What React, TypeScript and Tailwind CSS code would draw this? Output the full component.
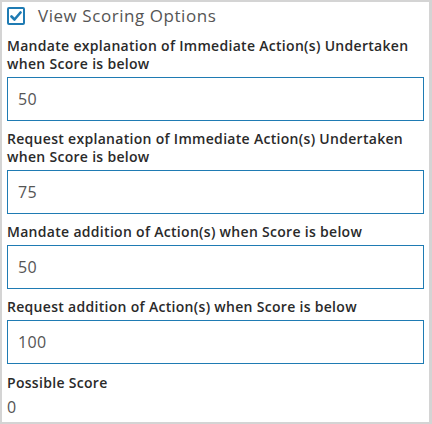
import React from "react";

const fields = [
  { label: "Mandate explanation of Immediate Action(s) Undertaken when Score is below", value: "50" },
  { label: "Request explanation of Immediate Action(s) Undertaken when Score is below", value: "75" },
  { label: "Mandate addition of Action(s) when Score is below", value: "50" },
  { label: "Request addition of Action(s) when Score is below", value: "100" },
];

export default function App() {
  return (
    <div className="w-[432px] h-[424px] bg-white border-[#d4d4d4] border-t-2 border-l-2 border-r-[3px] border-b-2 overflow-hidden" style={{ fontFamily: '"Open Sans", sans-serif' }}>
      <div className="flex items-center h-[27px] pl-[5px]">
        <div className="w-[18px] h-[18px] border-2 border-[#1f7bb3] rounded-[2px] flex items-center justify-center">
          <svg width="12" height="10" viewBox="0 0 12 10">
            <path d="M1.5 5.5 L4.5 8.5 L10.5 1.5" fill="none" stroke="#1f7bb3" strokeWidth="2.6" strokeLinecap="round" strokeLinejoin="round" />
          </svg>
        </div>
        <span className="ml-[13px] text-[17px] text-[#555] leading-none tracking-[0.55px]">View Scoring Options</span>
      </div>
      <div className="flex flex-col px-[5px]">
        {fields.map((f, i) => (
          <div key={i} className="flex flex-col pt-[8px] pb-[1px]">
            <div className="text-[14px] font-semibold leading-[18px] text-[#2a2a2a] tracking-[0.3px]">{f.label}</div>
            <div className="mt-[4px] h-[44px] border border-[#1f7bb3] flex items-center pl-[10px] text-[16px] text-[#555] tracking-[0.4px]">{f.value}</div>
          </div>
        ))}
        <div className="pt-[9px] text-[14px] font-semibold leading-[18px] text-[#2a2a2a] tracking-[0.3px]">Possible Score</div>
        <div className="mt-[6px] text-[16px] leading-[18px] text-[#555]">0</div>
      </div>
    </div>
  );
}
